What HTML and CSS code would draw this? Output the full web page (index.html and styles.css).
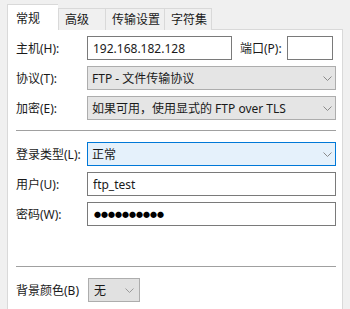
FILE: index.html
```html
<!DOCTYPE html>
<html lang="zh-CN">
<head>
    <meta charset="UTF-8">
    <meta name="viewport" content="width=device-width, initial-scale=1.0">
    <title>站点设置</title>
    <link rel="stylesheet" href="styles.css">
</head>
<body>
    <div class="dialog">
        <div class="tabs">
            <div class="tab active">常规</div>
            <div class="tab">高级</div>
            <div class="tab">传输设置</div>
            <div class="tab">字符集</div>
        </div>

        <div class="panel">
            <div class="form-group">
                <div class="row">
                    <label class="label" for="host">主机(H):</label>
                    <div class="host-line">
                        <input class="field host" id="host" type="text" value="192.168.182.128">
                        <label class="port-label" for="port">端口(P):</label>
                        <input class="field port" id="port" type="text" value="">
                    </div>
                </div>
                <div class="row">
                    <span class="label">协议(T):</span>
                    <div class="combo">
                        <span>FTP - 文件传输协议</span>
                        <svg class="chevron" width="9" height="5" viewBox="0 0 9 5"><path d="M0.5 0.5 L4.5 4.5 L8.5 0.5" fill="none" stroke="#8a8a8a" stroke-width="1"/></svg>
                    </div>
                </div>
                <div class="row">
                    <span class="label">加密(E):</span>
                    <div class="combo">
                        <span>如果可用，使用显式的 FTP over TLS</span>
                        <svg class="chevron" width="9" height="5" viewBox="0 0 9 5"><path d="M0.5 0.5 L4.5 4.5 L8.5 0.5" fill="none" stroke="#8a8a8a" stroke-width="1"/></svg>
                    </div>
                </div>
            </div>

            <hr class="separator">

            <div class="form-group">
                <div class="row">
                    <span class="label">登录类型(L):</span>
                    <div class="combo focused">
                        <span>正常</span>
                        <svg class="chevron" width="9" height="5" viewBox="0 0 9 5"><path d="M0.5 0.5 L4.5 4.5 L8.5 0.5" fill="none" stroke="#8a8a8a" stroke-width="1"/></svg>
                    </div>
                </div>
                <div class="row">
                    <label class="label" for="user">用户(U):</label>
                    <input class="field" id="user" type="text" value="ftp_test">
                </div>
                <div class="row">
                    <span class="label">密码(W):</span>
                    <div class="field password">●●●●●●●●●●</div>
                </div>
            </div>

            <hr class="separator lower">

            <div class="color-row">
                <span class="color-label">背景颜色(B)</span>
                <div class="combo small">
                    <span>无</span>
                    <svg class="chevron" width="9" height="5" viewBox="0 0 9 5"><path d="M0.5 0.5 L4.5 4.5 L8.5 0.5" fill="none" stroke="#9a9a9a" stroke-width="1"/></svg>
                </div>
            </div>
        </div>
    </div>
</body>
</html>
```

FILE: styles.css
```css
* {
    box-sizing: border-box;
}

body {
    margin: 0;
    background: #f0f0f0;
    font-family: 'Noto Sans', 'Noto Sans CJK SC', sans-serif;
    font-size: 12px;
    color: #1a1a1a;
}

.dialog {
    padding: 4px 7px 0 7px;
    width: 350px;
    height: 309px;
    overflow: hidden;
}

/* tab strip */
.tabs {
    display: flex;
    align-items: flex-end;
    height: 26px;
    position: relative;
    z-index: 1;
    margin-bottom: -1px;
}

.tab {
    height: 22px;
    min-width: 47px;
    padding: 3px 4px 0 6px;
    background: #f0f0f0;
    border: 1px solid #d9d9d9;
    border-bottom: none;
    border-right: none;
    line-height: 16px;
}

.tab:last-child {
    border-right: 1px solid #d9d9d9;
}

.tab.active {
    height: 26px;
    width: 51px;
    padding: 6px 0 0 8px;
    background: #fff;
    border-right: none;
}

.tab.active + .tab {
    border-left: 1px solid #d9d9d9;
}

/* panel body */
.panel {
    background: #fff;
    border: 1px solid #d9d9d9;
    height: 290px;
    width: 336px;
    padding: 6px 6px 0 8px;
}

.form-group {
    display: flex;
    flex-direction: column;
    gap: 6px;
}

.row {
    display: flex;
    align-items: center;
    height: 24px;
}

.label {
    width: 71px;
    flex-shrink: 0;
}

.field {
    height: 24px;
    flex: 1;
    min-width: 0;
    border: 1px solid #7a7a7a;
    padding: 0 5px;
    font: inherit;
    color: #1a1a1a;
    background: #fff;
    outline: none;
}

.host-line {
    display: flex;
    align-items: center;
    flex: 1;
}

.field.host {
    flex: none;
    width: 145px;
}

.port-label {
    margin-left: 8px;
    margin-right: 5px;
}

.field.port {
    flex: none;
    width: 46px;
}

.field.password {
    display: flex;
    align-items: center;
    padding-left: 6px;
    font-family: 'Noto Sans CJK SC', sans-serif;
    font-size: 7px;
    letter-spacing: 0;
    color: #000;
}

.combo {
    flex: 1;
    height: 24px;
    display: flex;
    align-items: center;
    justify-content: space-between;
    padding: 0 3px 0 4px;
    background: #e5e5e5;
    border: 1px solid #adadad;
}

.combo.focused {
    background: #e5f1fb;
    border-color: #0078d7;
}

.combo.small {
    flex: none;
    width: 52px;
    padding: 0 5px 0 5px;
    background: #e1e1e1;
}

.chevron {
    display: block;
}

.separator {
    border: none;
    border-top: 1px solid #a0a0a0;
    margin: 10px 0 11px 0;
}

.separator.lower {
    margin: 40px 0 11px 0;
}

.color-row {
    display: flex;
    align-items: center;
    gap: 9px;
}
```
